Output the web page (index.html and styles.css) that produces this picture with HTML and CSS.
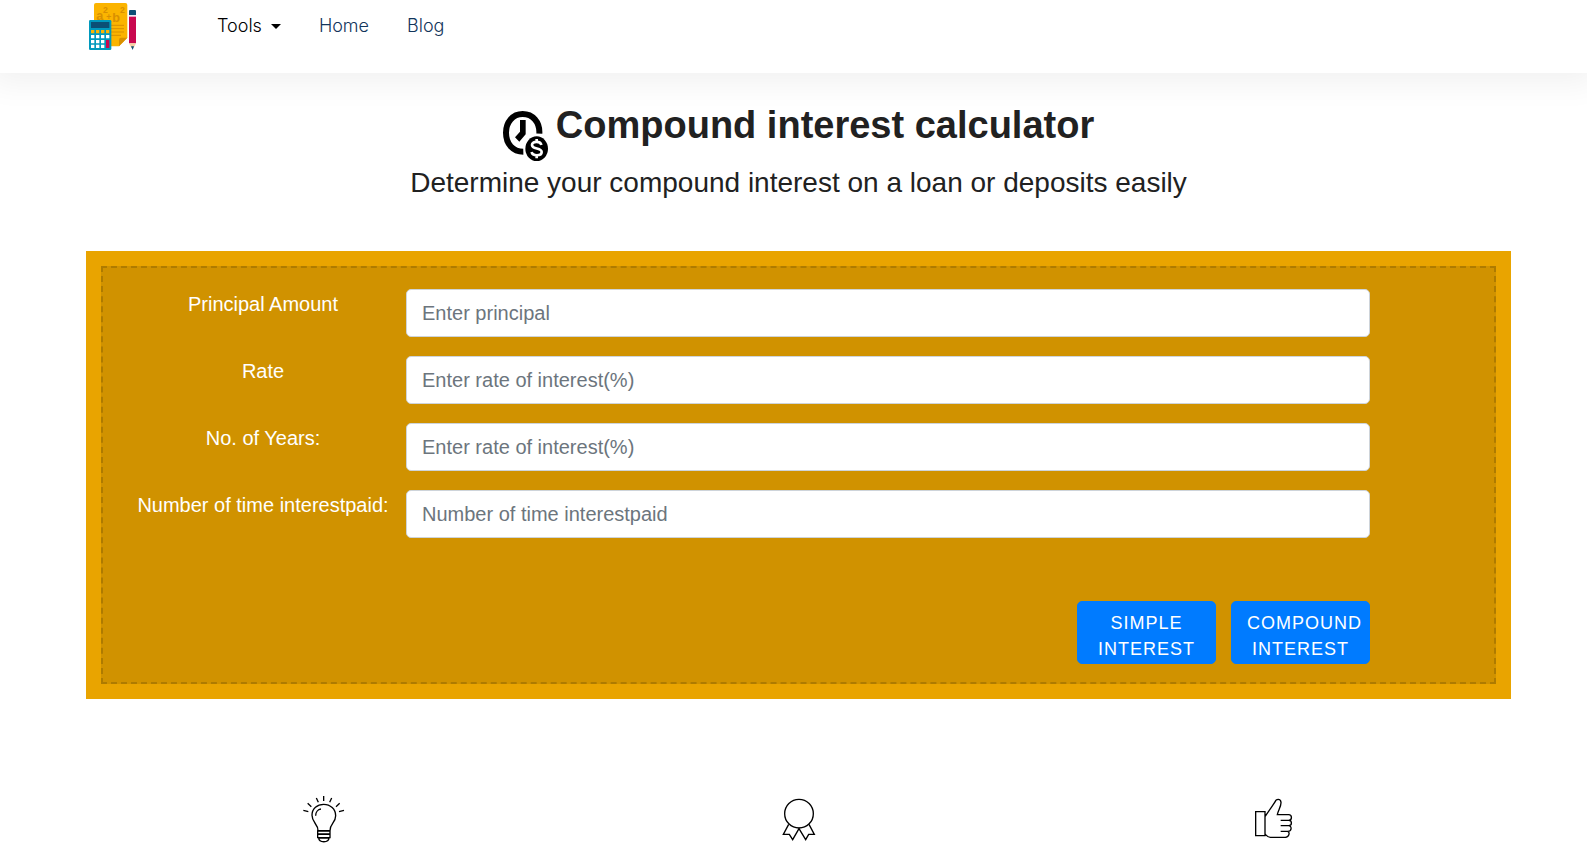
FILE: index.html
```html
<!DOCTYPE html>
<html lang="en">
<head>
  <meta charset="UTF-8" />
  <meta name="viewport" content="width=device-width, initial-scale=1" />
  <title>Compound interest calculator</title>
  <link rel="stylesheet" href="styles.css">
</head>
<body>
  <header class="navbar">
    <a class="brand" href="#" aria-label="Home page">
      <svg class="logo" viewBox="57 9 141 141">
        <path fill="#fbb400" d="M78 9h88q6 0 6 6v98l-25 26H78q-6 0-6-6V15q0-6 6-6z"/>
        <path fill="#d99000" d="M172 113l-25 26v-20q0-6 6-6z"/>
        <g fill="#d99000" font-family="Liberation Sans, Arial, sans-serif" font-weight="bold">
          <text x="79" y="61" font-size="38">a</text>
          <text x="99" y="39" font-size="26">2</text>
          <text x="109" y="61" font-size="26">+</text>
          <text x="127" y="65" font-size="38">b</text>
          <text x="150" y="39" font-size="26">2</text>
        </g>
        <path stroke="#d99000" stroke-width="3" d="M122 76h40M122 86h40M122 96h40M122 106h31"/>
        <rect x="57" y="60" width="67" height="90" rx="4" fill="#0099bd"/>
        <rect x="63" y="66" width="55" height="18" fill="#0b4f75"/>
        <path stroke="#fbb400" stroke-width="10" stroke-dasharray="10 5" d="M63 95h55"/>
        <path stroke="#fff" stroke-width="10" stroke-dasharray="10 5" d="M63 110h55M63 125h40M63 139h40"/>
        <rect x="108" y="120" width="10" height="24" fill="#c9084f"/>
        <rect x="177" y="30" width="21" height="17" rx="3" fill="#0b4f75"/>
        <rect x="177" y="45" width="21" height="5" fill="#e8e8f0"/>
        <rect x="177" y="50" width="21" height="80" fill="#c9084f"/>
        <path fill="#f7cfa3" d="M177 130h21l-7 14h-7z"/>
        <path fill="#0b4f75" d="M183 139h9l-4 11z"/>
      </svg>
    </a>
    <nav class="nav-links">
      <button type="button" class="nav-item dropdown">Tools</button>
      <a class="nav-item" href="#">Home</a>
      <a class="nav-item" href="#">Blog</a>
    </nav>
  </header>

  <main class="container">
    <div class="heading">
      <svg class="clock" viewBox="30 33 135 150">
        <path fill="none" stroke="#000" stroke-width="18" d="M139 101C141 66 119 42 89 42C59 42 39 67 39 98C39 132 60 155 91 155"/>
        <path fill="#000" d="M81 60h17v43l-19 22-13-13 15-17z"/>
        <circle cx="131" cy="147" r="39" fill="#fff"/>
        <ellipse cx="131" cy="146" rx="34" ry="37" fill="#000"/>
        <path fill="none" stroke="#fff" stroke-width="8" d="M145 135C143 123 117 122 117 135C117 149 146 142 146 156C146 169 118 169 116 156M131 117v11M131 164v11"/>
      </svg>
      <h1>Compound interest calculator</h1>
    </div>
    <p class="subtitle">Determine your compound interest on a loan or deposits easily</p>

    <section class="calculator">
      <form id="calcForm" class="calc-form">
        <label for="principal">Principal Amount</label>
        <input type="text" id="principal" placeholder="Enter principal" />

        <label for="rate">Rate</label>
        <input type="text" id="rate" placeholder="Enter rate of interest(%)" />

        <label for="years">No. of Years:</label>
        <input type="text" id="years" placeholder="Enter rate of interest(%)" />

        <label for="times">Number of time interestpaid:</label>
        <input type="text" id="times" placeholder="Number of time interestpaid" />

        <div class="actions">
          <button type="button" class="btn">Simple Interest</button>
          <button type="button" class="btn">Compound Interest</button>
        </div>
      </form>
    </section>

    <section class="features">
      <div class="feature">
        <svg class="feature-icon" viewBox="-3 0 180 195">
          <path d="M69 131C70 111 51 108 51 85C51 65 67 52 86 52C106 52 122 66 122 86C122 108 104 111 105 131zM62 86C62 75 69 67 78 66M68 132h37v9H68zM68 142h37v10H68zM71 153h31C101 168 72 168 71 153zM86 27v15M64 33l6 13M110 33l-6 13M38 49l11 10M134 49l-11 10M25 70l15 4M147 70l-15 4"/>
        </svg>
      </div>
      <div class="feature">
        <svg class="feature-icon" viewBox="-3 0 180 195">
          <circle cx="87" cy="80" r="43"/>
          <path d="M56 112L40 142L58 142L68 158L87 125L107 158L116 142L133 142L117 112"/>
        </svg>
      </div>
      <div class="feature">
        <svg class="feature-icon" viewBox="-3 0 180 195">
          <path d="M32 74h28v72H32zM60 89L90 45C93 35 107 34 108 46C109 58 99 71 97 83H131C142 83 142 100 131 100H107M131 100C142 100 142 116 131 116H107M131 116C141 116 141 133 129 133H107M127 133C136 134 133 151 121 151H76C68 151 65 146 60 141"/>
        </svg>
      </div>
    </section>
  </main>
</body>
</html>
```
FILE: styles.css
```css
* {
  box-sizing: border-box;
}
body {
  margin: 0;
  font-family: "Liberation Sans", Arial, sans-serif;
  color: #212529;
  background: #fff;
}
.navbar {
  display: flex;
  height: 73px;
  padding: 3px 89px;
  background: #fff;
  box-shadow: 0 0 32px 10px rgba(0, 0, 0, 0.06);
}
.brand,
.logo {
  display: block;
  width: 47px;
  height: 47px;
}
.nav-links {
  display: flex;
  align-items: flex-start;
  gap: 38px;
  margin-left: 81px;
  padding-top: 9px;
}
.nav-item {
  padding: 0;
  border: none;
  background: none;
  font-family: Inter, sans-serif;
  font-size: 18px;
  font-weight: 300;
  line-height: 28px;
  color: #12355b;
  text-decoration: none;
}
.dropdown {
  display: flex;
  align-items: center;
  gap: 9px;
  color: #000;
  cursor: pointer;
}
.dropdown::after {
  content: "";
  border-top: 5px solid #000;
  border-left: 5px solid transparent;
  border-right: 5px solid transparent;
}
.container {
  padding: 29px 76px 0 86px;
}
.heading {
  display: flex;
  justify-content: center;
  gap: 8px;
}
.clock {
  width: 45px;
  height: 50px;
  margin-top: 9px;
}
h1 {
  margin: 0;
  font-size: 38px;
  line-height: 46px;
  color: #212121;
}
.subtitle {
  margin: 5px 0 51px;
  font-size: 28px;
  line-height: 34px;
  text-align: center;
  color: #212121;
}
.calculator {
  padding: 15px;
  background: #e9a400;
}
.calc-form {
  display: grid;
  grid-template-columns: 286px 1fr;
  row-gap: 19px;
  padding: 21px 124px 18px 17px;
  border: 2px dashed #ae7b00;
  background: #d09200;
}
label {
  font-size: 20px;
  line-height: 30px;
  text-align: center;
  color: #fff;
}
input {
  width: 100%;
  height: 48px;
  padding: 0 15px;
  border: 1px solid #ced4da;
  border-radius: 5px;
  background: #fff;
  font-family: inherit;
  font-size: 20px;
  color: #495057;
}
input::placeholder {
  color: #6c757d;
}
.actions {
  grid-column: 1 / -1;
  display: flex;
  justify-content: flex-end;
  gap: 15px;
  margin-top: 44px;
}
.btn {
  width: 139px;
  padding: 8px 15px 1px;
  border: 1px solid #007bff;
  border-radius: 5px;
  background: #007bff;
  font-family: inherit;
  font-size: 18px;
  line-height: 26px;
  letter-spacing: 1px;
  text-transform: uppercase;
  color: #fff;
  cursor: pointer;
}
.features {
  display: grid;
  grid-template-columns: repeat(3, 1fr);
  margin-top: 88px;
}
.feature {
  display: flex;
  justify-content: center;
}
.feature-icon {
  width: 60px;
  height: 65px;
  fill: none;
  stroke: #000;
  stroke-width: 4;
}
```
